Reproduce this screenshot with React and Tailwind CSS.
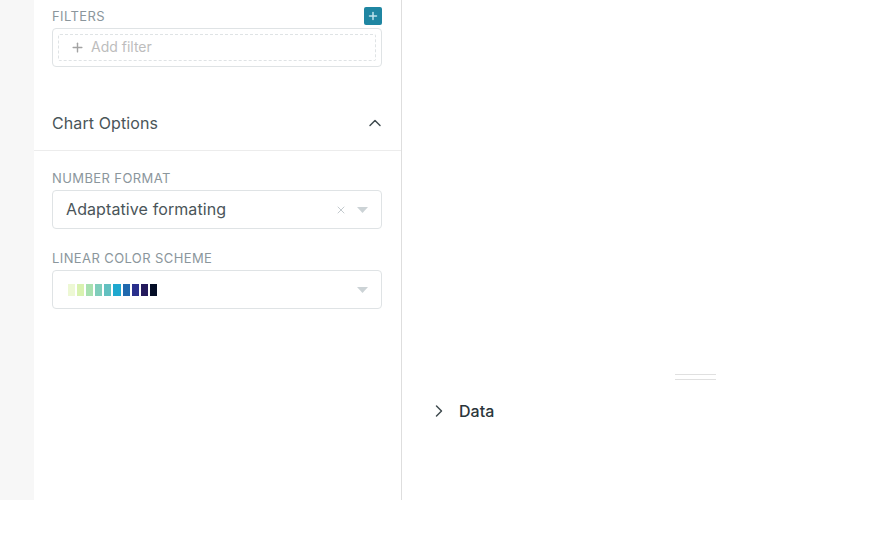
import React from 'react';
import { ChevronUp, ChevronRight, Plus, X } from 'lucide-react';

const swatches = [
  '#edf8d4', '#d9f2b0', '#a8e0b0', '#7fcdbb', '#62c0c0',
  '#1fa8cf', '#2069ae', '#2a2f8c', '#241a5c', '#040d26',
];

function Caret() {
  return (
    <svg width="11" height="6" viewBox="0 0 11 6" className="shrink-0">
      <path d="M0 0h11L5.5 6z" fill="#ccd3d6" />
    </svg>
  );
}

function Label({ children }) {
  return <div className="text-[13px] leading-4 uppercase tracking-[0.4px] text-[#8b969c]">{children}</div>;
}

export default function App() {
  return (
    <div className="h-[545px] bg-white font-['Inter',sans-serif]">
      <div className="flex h-[500px]">
        <div className="w-[34px] bg-[#f7f7f7]" />

        {/* Left panel */}
        <div className="w-[368px] border-r border-[#dedede]">
          <div className="pl-[18px] pr-[19px]">
            <div className="flex items-center justify-between h-[28px] pt-[4px]">
              <Label>Filters</Label>
              <div className="w-[18px] h-[18px] rounded-[2px] bg-[#1f86a2] flex items-center justify-center">
                <Plus size={12} strokeWidth={3} color="#bfe3ec" />
              </div>
            </div>
            <div className="h-[39px] border border-[#dfe3e5] rounded-[4px] p-[5px]">
              <div className="h-[27px] border border-dashed border-[#dfe3e5] rounded-[2px] flex items-center pl-[11px] gap-[6px] pb-[1px]">
                <Plus size={15} strokeWidth={2.25} color="#a3a3a3" />
                <span className="text-sm text-[#bdbdbd]">Add filter</span>
              </div>
            </div>
          </div>

          <div className="mt-[27px] h-[54px] pt-[2px] box-content border-b border-[#ececec] flex items-center justify-between pl-[18px] pr-[16px]">
            <span className="text-base tracking-[0.1px] text-[#4a5559]">Chart Options</span>
            <ChevronUp size={20} strokeWidth={1.75} color="#3f4a4f" />
          </div>

          <div className="pl-[18px] pr-[19px] pt-[19px]">
            <Label>Number format</Label>
            <div className="mt-[4px] h-[39px] border border-[#dfe3e5] rounded-[4px] flex items-center pl-[13px] pr-[13px]">
              <span className="flex-1 text-base tracking-[0.1px] text-[#4a5559] pb-[1px]">Adaptative formating</span>
              <X size={12} strokeWidth={1.75} color="#bcc4c8" className="mr-[10px]" />
              <Caret />
            </div>

            <div className="mt-[21px]">
              <Label>Linear color scheme</Label>
            </div>
            <div className="mt-[4px] h-[39px] border border-[#dfe3e5] rounded-[4px] flex items-center pl-[15px] pr-[13px]">
              <div className="flex-1 flex gap-[2px]">
                {swatches.map(c => (
                  <span key={c} className="w-[7.1px] h-[12px]" style={{ backgroundColor: c }} />
                ))}
              </div>
              <Caret />
            </div>
          </div>
        </div>

        {/* Right panel */}
        <div className="flex-1 flex flex-col">
          <div className="h-[374px] shrink-0" />
          <div className="w-[41px] h-[6px] ml-[273px] border-y border-[#e0e0e0]" />
          <div className="mt-[19px] flex items-center pl-[27px] gap-[10px]">
            <ChevronRight size={20} strokeWidth={1.75} color="#3f4a4f" />
            <span className="text-base font-medium text-[#2b363b]">Data</span>
          </div>
        </div>
      </div>
    </div>
  );
}
